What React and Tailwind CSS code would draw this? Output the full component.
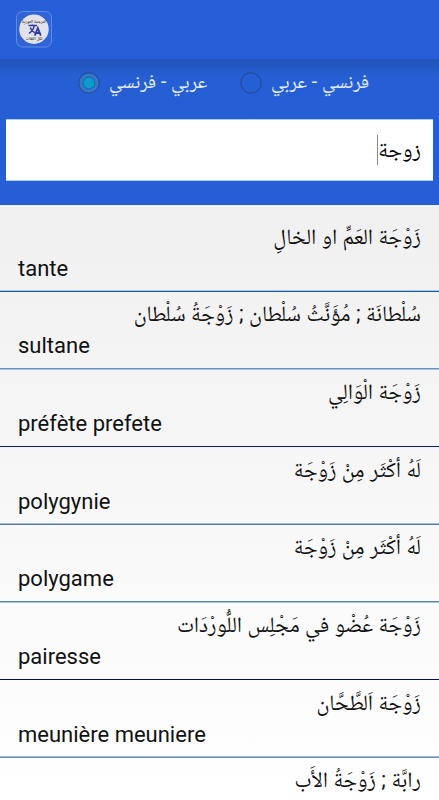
import React, { useState } from 'react';

const entries = [
  { ar: 'زَوْجَة العَمِّ او الخالِ', fr: 'tante', height: 'h-[77px]', line: 'border-t-[#a0cdf2] border-b-[#1d5796]' },
  { ar: 'سُلْطانَة ; مُؤَنَّثُ سُلْطان ; زَوْجَةُ سُلْطان', fr: 'sultane', height: 'h-[78px]', line: 'border-t-[#6a90c4] border-b-[#a8c0e4]' },
  { ar: 'زَوْجَة الْوَالِي', fr: 'préfète prefete', height: 'h-[78px]', line: 'border-t-[#0a1468] border-b-[#f5f7fc]' },
  { ar: 'لَهُ أكْثَر مِنْ زَوْجَة', fr: 'polygynie', height: 'h-[77px]', line: 'border-t-[#a8c0e0] border-b-[#4f77ab]' },
  { ar: 'لَهُ أكْثَر مِنْ زَوْجَة', fr: 'polygame', height: 'h-[78px]', line: 'border-t-[#5a85ad] border-b-[#a8c4da]' },
  { ar: 'زَوْجَة عُضْو في مَجْلِس اللُّورْدَات', fr: 'pairesse', height: 'h-[78px]', line: 'border-t-[#06105f] border-b-[#fbfbfe]' },
  { ar: 'زَوْجَة اَلطَّحَّان', fr: 'meunière meuniere', height: 'h-[77px]', line: 'border-t-[#9ab4dc] border-b-[#6f8db8]' },
  { ar: 'رابَّة ; زَوْجَةُ الأَب', fr: '', height: 'h-[78px]', line: 'border-transparent' },
];

const directions = [
  { id: 'ar-fr', label: 'عربي - فرنسي' },
  { id: 'fr-ar', label: 'فرنسي - عربي' },
];

const AppIcon = () => (
  <svg width="36" height="37" viewBox="0 0 36 37" className="block font-['Noto_Naskh_Arabic',sans-serif]">
    <rect x="0.5" y="0.5" width="35" height="35.5" rx="6" fill="#3064d6" stroke="#6f95e8" strokeWidth="0.8" />
    <circle cx="18" cy="18.2" r="14.7" fill="#e2e3ea" />
    <text x="18" y="12.4" textAnchor="middle" fontSize="4.4" fontWeight="bold" fill="#333">الترجمة الفورية</text>
    <g stroke="#3238a8" strokeWidth="1.5" fill="none">
      <path d="M12.5 14.6h8.5M16.5 13.4v1.200M13 22.300c3-2 4.800-4.600 5.200-7.700M14.200 16.600c1 2.200 2.500 4 4.600 5.200" />
      <path d="M18.800 24.600l3-7.600 3 7.600M19.800 22h4" strokeWidth="1.8" />
    </g>
    <text x="18" y="28.5" textAnchor="middle" fontSize="4.4" fontWeight="bold" fill="#333">لكل اللغات</text>
  </svg>
);

const Radio = ({ checked }) => (
  <svg width="22" height="22" viewBox="0 0 22 22" className="shrink-0">
    <circle cx="11" cy="11" r="10.2" fill={checked ? '#3474cb' : '#265fd4'} stroke="#27478f" strokeWidth="1" />
    {checked && <circle cx="11" cy="11" r="5.8" fill="#0a9ccc" stroke="#126da8" strokeWidth="1" />}
  </svg>
);

const App = () => {
  const [direction, setDirection] = useState('ar-fr');

  return (
    <div className="h-[800px] w-full overflow-hidden bg-linear-to-b from-[#ebebeb] to-white font-['Roboto','Noto_Naskh_Arabic',sans-serif] text-[#111]">
      <header className="h-[59px] bg-[#265fd7] pl-4 pt-[11px]">
        <AppIcon />
      </header>

      <section className="h-[146px] bg-[#265fd5]">
        <div className="flex h-[60px] items-start bg-linear-to-b from-[#2355b9] via-[#265fd4] via-30% to-[#265fd5] pl-[78px] pt-[13px]">
          {directions.map((d) => (
            <button
              key={d.id}
              onClick={() => setDirection(d.id)}
              className="flex h-[22px] w-[162px] items-center gap-[9px] text-[19.3px] text-[#e6effd]"
            >
              <Radio checked={direction === d.id} />
              <span dir="rtl" className="whitespace-nowrap pb-0.5">{d.label}</span>
            </button>
          ))}
        </div>
        <div dir="rtl" className="mx-1.5 flex h-[62px] items-center border-y border-[#a5d0f6] bg-white pr-3 text-[22px] text-black">
          <span className="whitespace-nowrap pb-0.5">زوجة</span>
          <span className="h-[30px] w-px bg-[#888]" />
        </div>
      </section>

      <main className="pt-[10px]">
        {entries.map((e, i) => (
          <div key={i} className={`flex flex-col justify-between ${e.height}`}>
            <div className="px-[18px] pt-1.5">
              <p dir="rtl" className="h-8 whitespace-nowrap text-[21.9px] leading-8">{e.ar}</p>
              <p className="h-8 whitespace-nowrap text-[22px] leading-8">{e.fr}</p>
            </div>
            <div className={`h-0.5 border-y ${e.line}`} />
          </div>
        ))}
      </main>
    </div>
  );
};

export default App;
